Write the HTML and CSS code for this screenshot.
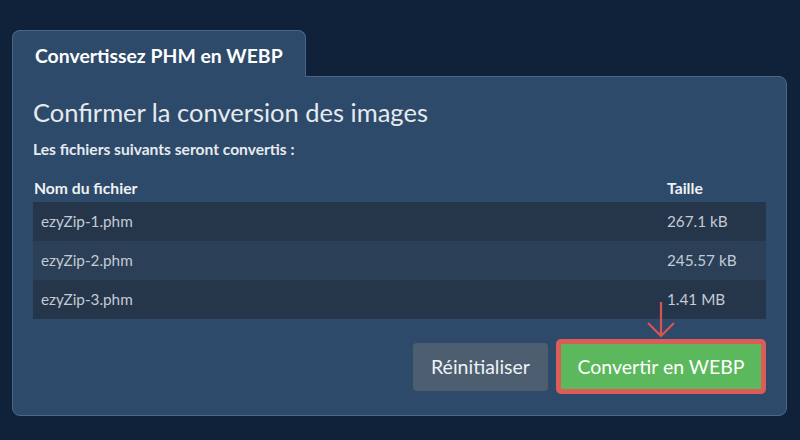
FILE: index.html
```html
<!DOCTYPE html>
<html lang="fr">
<head>
<meta charset="utf-8">
<title>Convertissez PHM en WEBP</title>
<link rel="stylesheet" href="styles.css">
</head>
<body>
<div class="page">
  <div class="tab">Convertissez PHM en WEBP</div>
  <div class="panel">
    <h1 class="title">Confirmer la conversion des images</h1>
    <p class="subtitle">Les fichiers suivants seront convertis :</p>
    <div class="table">
      <div class="row head">
        <div class="cell name">Nom du fichier</div>
        <div class="cell size">Taille</div>
      </div>
      <div class="row odd">
        <div class="cell name">ezyZip-1.phm</div>
        <div class="cell size">267.1 kB</div>
      </div>
      <div class="row even">
        <div class="cell name">ezyZip-2.phm</div>
        <div class="cell size">245.57 kB</div>
      </div>
      <div class="row odd">
        <div class="cell name">ezyZip-3.phm</div>
        <div class="cell size">1.41 MB</div>
      </div>
    </div>
    <div class="actions">
      <button class="btn reset">Réinitialiser</button>
      <div class="convert-wrap">
        <svg class="arrow" width="32" height="38" viewBox="0 0 32 38" aria-hidden="true">
          <path d="M16 1 V35 M3 22 L16 35 L29 22" fill="none" stroke="#d9534f" stroke-width="2.2"/>
        </svg>
        <button class="btn convert">Convertir en WEBP</button>
      </div>
    </div>
  </div>
</div>
</body>
</html>
```
FILE: styles.css
```css
html, body {
  margin: 0;
  padding: 0;
}
body {
  background: #10223a;
  font-family: Lato, "Noto Sans", sans-serif;
  width: 800px;
  height: 440px;
  overflow: hidden;
}
.page {
  padding: 30px 13px 0 12px;
}
.tab {
  position: relative;
  z-index: 1;
  box-sizing: border-box;
  width: 294px;
  height: 47px;
  margin-bottom: -1px;
  background: #2d4a6a;
  border: 1px solid #4b6787;
  border-bottom: none;
  border-radius: 8px 8px 0 0;
  color: #ffffff;
  font-weight: 700;
  font-size: 19.4px;
  padding: 13px 0 0 22px;
  line-height: 24px;
}
.panel {
  background: #2d4a6a;
  border: 1px solid #4b6787;
  border-radius: 0 8px 8px 8px;
  padding: 20px 20px 21px 20px;
}
.title {
  margin: 0;
  font-weight: 400;
  font-size: 25.5px;
  line-height: 31px;
  color: #e6eaef;
}
.subtitle {
  margin: 11px 0 0 0;
  font-size: 15.6px;
  font-weight: 700;
  line-height: 20px;
  color: #e6eaef;
}
.table {
  margin-top: 17px;
}
.row {
  display: grid;
  grid-template-columns: 1fr 99px;
}
.cell {
  font-size: 15.3px;
  line-height: 19px;
}
.head .cell {
  font-size: 15.7px;
  font-weight: 700;
  color: #eef1f4;
  padding: 3px 0 4px 1px;
}
.head .size {
  padding-left: 0;
}
.row.odd, .row.even {
  color: #c3cbd5;
}
.row.odd {
  background: #25364b;
}
.row.even {
  background: #2b3f57;
}
.row.odd .cell, .row.even .cell {
  padding: 10px 0 10px 8px;
}
.row.odd .size, .row.even .size {
  padding-left: 0;
}
.actions {
  margin-top: 20px;
  display: flex;
  justify-content: flex-end;
  align-items: center;
  gap: 8px;
}
.btn {
  font-family: Lato, "Noto Sans", sans-serif;
  font-size: 19.5px;
  cursor: pointer;
}
.reset {
  box-sizing: border-box;
  width: 135px;
  height: 48px;
  background: #4d5e70;
  color: #eef1f4;
  border: none;
  border-radius: 4px;
  padding: 0;
}
.convert-wrap {
  position: relative;
}
.arrow {
  position: absolute;
  left: 89px;
  top: -38px;
}
.convert {
  display: block;
  box-sizing: border-box;
  width: 210px;
  height: 55px;
  background: #5cb85c;
  color: #ffffff;
  border: 5px solid #dc5d58;
  border-radius: 5px;
  padding: 0;
}
```
